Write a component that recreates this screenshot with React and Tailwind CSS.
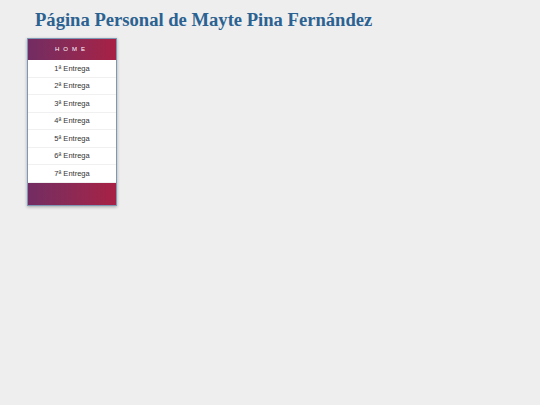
export default function App() {
  const items = ["1ª Entrega", "2ª Entrega", "3ª Entrega", "4ª Entrega", "5ª Entrega", "6ª Entrega", "7ª Entrega"];
  return (
    <div className="w-[540px] h-[405px] bg-[#eeeeee] overflow-hidden">
      <h1 className="pl-[35px] pt-[8px] text-[18.6px] leading-[23px] font-bold text-[#2c6291]" style={{ fontFamily: '"Liberation Serif", serif' }}>
        Página Personal de Mayte Pina Fernández
      </h1>
      <div className="ml-[27px] mt-[7px] w-[90px] border border-[#7d97b5] shadow-[0_1px_3px_rgba(0,0,0,0.3)] bg-white" style={{ fontFamily: '"Liberation Sans", Arial, sans-serif' }}>
        <div className="h-[21px] flex items-center justify-center bg-gradient-to-r from-[#722c62] to-[#a81f44] text-white text-[6px] tracking-[4px]">
          HOME
        </div>
        {items.map((t, i) => (
          <div key={i} className="h-[17.5px] flex items-center justify-center text-[7.5px] text-[#333] border-b border-[#f0f0f0] last:border-b-0">
            {t}
          </div>
        ))}
        <div className="h-[22px] bg-gradient-to-r from-[#722c62] to-[#a81f44]" />
      </div>
    </div>
  );
}
